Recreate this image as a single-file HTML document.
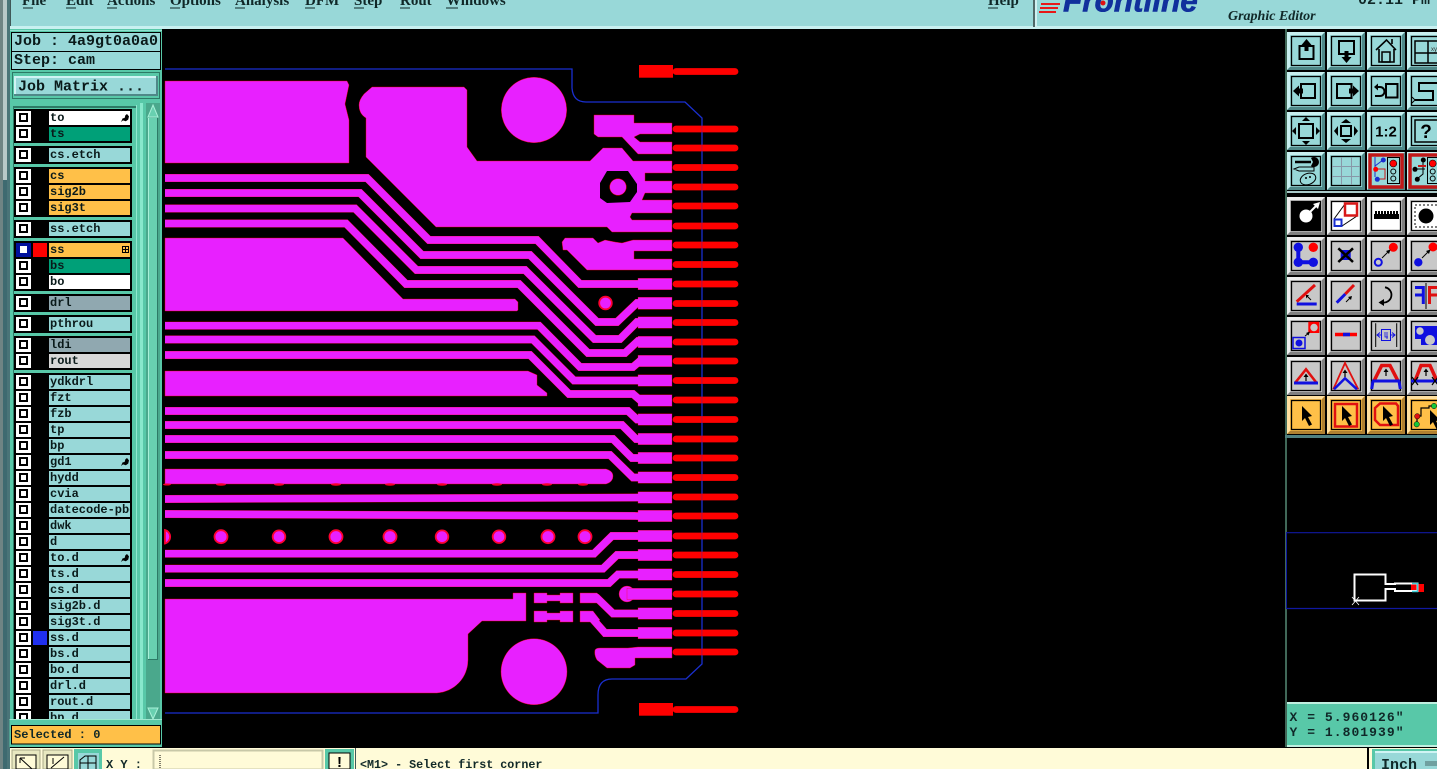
<!DOCTYPE html>
<html><head><meta charset="utf-8"><style>
html,body{margin:0;padding:0;background:#000;width:1437px;height:769px;overflow:hidden}
#g{position:absolute;left:0;top:0}
.p{position:absolute}
.job{position:absolute;left:11px;width:150px;background:#98d8d8;border:1px solid #000;box-sizing:border-box;font:bold 15px/17px "Liberation Mono",monospace;color:#0a1a1a;padding-left:2px;white-space:pre}
.gp{position:absolute;left:14px;width:118px;background:#000}
.r{position:absolute;left:0;width:135px;height:14px}
.c{position:absolute;left:16px;top:0;width:15px;height:14px;background:#fff}
.c:before{content:"";position:absolute;left:3px;top:2px;width:5px;height:5px;border:2px solid #000}
.c.s{background:#00109c}
.c.s:before{left:4px;top:3px;width:7px;height:7px;border:0;background:#fff}
.l{position:absolute;left:49px;top:0;width:81px;height:14px;overflow:hidden;font:bold 12px/14px "Liberation Mono",monospace;color:#0a1a1a;padding-left:1px;box-sizing:border-box;white-space:pre;background:#98d8d8}
.W{background:#fff}.G{background:#00a078}.O{background:#ffc048}.D{background:#90a8b0}.L{background:#d8d8d8}
.sw{position:absolute;left:33px;top:0;width:14px;height:14px}
.h{position:absolute;right:1px;top:3px;width:8px;height:8px;background:#000;clip-path:polygon(0 100%,20% 55%,45% 50%,55% 15%,75% 0,100% 30%,90% 70%,60% 90%,25% 80%)}
</style></head><body>
<svg id="g" width="1437" height="769" viewBox="0 0 1437 769" xmlns="http://www.w3.org/2000/svg">
<defs>
<g id="tr" fill="none" stroke-linejoin="miter">
<polyline points="165,178 367,178 429,240 537,240 580,284 640,284"/>
<polyline points="165,193 360,193 422,255 530,255 597,322 617,322 637,303 645,303"/>
<polyline points="165,208.500 355,208.500 416.500,270 525,270 594.500,339 620,339 637,322 645,322"/>
<polyline points="165,223.500 346,223.500 406,284 519,284 588,353 625,353 638,341 645,341"/>
<polyline points="165,325.700 539,325.700 580,367 633,367 640,361 645,361"/>
<polyline points="165,339.500 533,339.500 574,380.500 645,380.500"/>
<polyline points="165,355 530,355 569,394 633,394 640,400 645,400"/>
<polyline points="165,411 628,411 637,419.500 645,419.500"/>
<polyline points="165,425 622,425 636,439 645,439"/>
<polyline points="165,439 613,439 632,458 645,458"/>
<polyline points="165,455 610,455 633,477.500 645,477.500"/>
<polyline points="165,499 640,497.500"/>
<polyline points="165,514 640,516"/>
<polyline points="165,553.700 594,553.700 612,536 645,536"/>
<polyline points="165,568.700 603,568.700 617,555 645,555"/>
<polyline points="165,583 609,583 618,574.500 645,574.500"/>
<polyline points="590,598 597,598 613,613.500 645,613.500"/>
<polyline points="587,616 590,616 605,633 645,633"/>
</g>
<g id="pads">
<rect x="638" y="278.300" width="34" height="11.400"/><rect x="638" y="297.300" width="34" height="12"/><rect x="638" y="316.800" width="34" height="11.400"/><rect x="638" y="336.300" width="34" height="11.400"/><rect x="638" y="355.300" width="34" height="11.400"/><rect x="638" y="374.800" width="34" height="11.400"/><rect x="638" y="394.800" width="34" height="11.400"/><rect x="638" y="413.800" width="34" height="11.400"/><rect x="638" y="433.300" width="34" height="11.400"/><rect x="638" y="452.300" width="34" height="11.400"/><rect x="638" y="471.800" width="34" height="11.400"/><rect x="638" y="491.800" width="34" height="11.400"/><rect x="638" y="510.300" width="34" height="11.400"/><rect x="638" y="530.300" width="34" height="11.400"/><rect x="638" y="549.300" width="34" height="11.400"/><rect x="638" y="568.800" width="34" height="11.400"/><rect x="627" y="588.300" width="45" height="11.400"/><rect x="638" y="607.800" width="34" height="11.400"/><rect x="638" y="627.300" width="34" height="11.400"/>
</g>
<g id="bT"><rect width="38" height="38" fill="#98d8d8"/><path d="M0 0H38L35 3H3V35L0 38Z" fill="#c8f0f0"/><path d="M38 0V38H0L3 35H35V3Z" fill="#4f8888"/><rect x="4.500" y="4.500" width="29" height="29" fill="none" stroke="#000" stroke-width="1.300"/></g>
<g id="bG"><rect width="38" height="38" fill="#c8c8c8"/><path d="M0 0H38L35 3H3V35L0 38Z" fill="#eee"/><path d="M38 0V38H0L3 35H35V3Z" fill="#808080"/><rect x="4.500" y="4.500" width="29" height="29" fill="none" stroke="#000" stroke-width="1.300"/></g>
<g id="bW"><rect width="38" height="38" fill="#c8c8c8"/><path d="M0 0H38L35 3H3V35L0 38Z" fill="#eee"/><path d="M38 0V38H0L3 35H35V3Z" fill="#808080"/><rect x="4.500" y="4.500" width="29" height="29" fill="#fff" stroke="#000" stroke-width="1.300"/></g>
<g id="bO"><rect width="38" height="38" fill="#ffc048"/><path d="M0 0H38L35 3H3V35L0 38Z" fill="#ffe0a0"/><path d="M38 0V38H0L3 35H35V3Z" fill="#b08030"/><rect x="4.500" y="4.500" width="29" height="29" fill="none" stroke="#000" stroke-width="1.300"/></g>
<polygon id="ptr" points="0,0 0,15 3,12 7,20 10,18.500 6,11 10,10" fill="#000"/>
</defs>

<!-- PCB -->
<path d="M165 69H572V88Q573 102 586 102H685L702 118V664L686 679H612Q598 679 598 695V713H165" fill="none" stroke="#1a2fd0" stroke-width="1.300"/>
<use href="#tr" stroke="#f00" stroke-width="7.900"/>
<g fill="#e820ff" stroke="#f00" stroke-width=".4">
<path d="M165 81H347L349 85L345 104L349 120V163H165Z"/>
<path d="M372 87L364 94Q359 100 359 105Q359 114 366 118V157L436 227H607L612 232H672V220H632L630 217L632 213H672V200H642L645 193H672V181H645V173H672V161H633L622 148H603L590 161H477L467 147V90L464 87Z"/>
<path d="M594 115H634V123H672V134H640L634 137L640 142H672V154H638L622 137H598L594 134Z"/>
<path d="M563 250L562 242L565 238H593L598 243L605 240L615 242L622 243L633 240H672V251H634V259H672V270H587L567 250Z"/>
<path d="M165 238H343L403 299H515L518 302V310L517 311H165Z"/>
<path d="M165 371H528L537 375V385L547 393V396H165Z"/>
<path d="M165 469H606Q613 471 613 476Q613 482 606 484H165Z"/>
<path d="M165 599H513V593H526V621H482L468 634V660A33 33 0 0 1 437 693H165Z"/>
<path d="M534 593H547V595H560V593H573V603H560V601H547V603H534Z"/>
<path d="M534 611H547V613H560V611H573V622H560V620H547V622H534Z"/>
<path d="M580 593H597L606 602V608L597 603H580Z"/>
<path d="M580 611H593L600 620L596 622H580Z"/>
<path d="M595 650Q596 648 600 648H628L638 647H672V658H635V665L630 668H607L597 660Q594 655 595 650Z"/>
<circle cx="534" cy="110" r="32.700"/><circle cx="534" cy="671.700" r="33"/>
<circle cx="627" cy="594" r="8"/>
</g>
<use href="#pads" fill="#e820ff" stroke="#f00" stroke-width=".3"/>
<use href="#tr" stroke="#e820ff" stroke-width="7.400"/>
<polygon points="607,171 628,171 637,184 637,192 630,202 607,203 600,198 600,183" fill="#000"/>
<circle cx="618" cy="187" r="8.300" fill="#e820ff" stroke="#f00" stroke-width=".5"/>
<g fill="#e820ff" stroke="#ff0030" stroke-width="1.800">
<circle cx="605.500" cy="303" r="6.300"/>
<circle cx="221" cy="536.700" r="6.500"/><circle cx="279" cy="536.700" r="6.300"/><circle cx="336" cy="536.700" r="6.500"/><circle cx="390" cy="536.700" r="6.500"/><circle cx="442" cy="536.700" r="6.300"/><circle cx="499" cy="536.700" r="6.300"/><circle cx="548" cy="536.700" r="6.500"/><circle cx="585" cy="536.700" r="6.500"/>
<path d="M165 530A7 7 0 0 1 165 543.500Z"/>
</g>
<g fill="#f80028"><ellipse cx="167" cy="484.500" rx="4" ry="1"/><ellipse cx="221" cy="484.500" rx="5" ry="1.200"/><ellipse cx="279" cy="484.500" rx="5" ry="1.200"/><ellipse cx="336" cy="484.500" rx="5" ry="1.200"/><ellipse cx="390" cy="484.500" rx="5" ry="1.200"/><ellipse cx="442" cy="484.500" rx="5" ry="1.200"/><ellipse cx="497" cy="484.500" rx="5" ry="1.200"/><ellipse cx="547" cy="484.500" rx="5" ry="1.200"/><ellipse cx="583" cy="484.500" rx="5" ry="1.200"/></g>
<!-- red pins -->
<g stroke="#f00" stroke-width="6.800" stroke-linecap="round" fill="none">
<path d="M676 129H735M676 148H735M676 167.500H735M676 187H735M676 206H735M676 226H735M676 245H735M676 264.500H735M676 284H735M676 303.500H735M676 322.500H735M676 342H735M676 361H735M676 380.500H735M676 400H735M676 419.500H735M676 439H735M676 458H735M676 477.500H735M676 497H735M676 516H735M676 536H735M676 555H735M676 574.500H735M676 594H735M676 613.500H735M676 633H735M676 652H735M676 71.500H735M676 709.500H735"/>
</g>
<rect x="639" y="65" width="34" height="12.700" fill="#f00"/><rect x="639" y="703" width="34" height="12.700" fill="#f00"/>
<rect x="701.500" y="118" width=".8" height="546" fill="#1a2fd0" opacity=".45"/>

<!-- top bars -->
<rect x="0" y="0" width="1437" height="29" fill="#98d8d8"/>
<rect x="0" y="26" width="1437" height="3" fill="#c8f0f0"/>
<rect x="1033" y="0" width="2" height="27" fill="#506868"/><rect x="1035" y="0" width="2" height="27" fill="#d0f0f0"/>
<rect x="10" y="0" width="1" height="26" fill="#405858"/>
<g font-family="Liberation Serif,serif" font-weight="bold" font-size="15" fill="#102828">
<text x="22" y="5">File</text><text x="66" y="5">Edit</text><text x="107" y="5">Actions</text><text x="170" y="5">Options</text><text x="235" y="5">Analysis</text><text x="305" y="5">DFM</text><text x="354" y="5">Step</text><text x="400" y="5">Rout</text><text x="446" y="5">Windows</text><text x="988" y="5">Help</text>
</g>
<path d="M23 8H33M66 8H76M107 8H117M170 8H180M235 8H245M305 8H315M354 8H364M400 8H410M446 8H458M988 8H998" stroke="#102828"/>
<text x="1063" y="11.500" font-family="Liberation Sans,sans-serif" font-weight="bold" font-style="italic" font-size="31.500" fill="#10309c" stroke="#10309c" stroke-width=".6">Frontline</text>
<circle cx="1103" cy="3" r="2.500" fill="#e01010"/>
<path d="M1041 4H1060M1040 8H1058M1039 12H1056" stroke="#e81818" stroke-width="2"/>
<text x="1228" y="20" font-family="Liberation Serif,serif" font-weight="bold" font-style="italic" font-size="14" fill="#102828">Graphic Editor</text>
<text x="1358" y="4" font-family="Liberation Mono,monospace" font-weight="bold" font-size="15" fill="#102828" xml:space="preserve">02:11 Pm</text>

<!-- left strip -->
<rect x="0" y="0" width="3" height="769" fill="#6f8484"/>
<rect x="3" y="0" width="4" height="180" fill="#b8c8c8"/><rect x="3" y="180" width="4" height="589" fill="#3e6a70"/>
<rect x="7" y="0" width="3" height="769" fill="#4a7478"/>

<!-- left panel bg -->
<rect x="10" y="29" width="152" height="718" fill="#58c8a8"/>
<rect x="10" y="30" width="152" height="1" fill="#90e0d0"/>
<rect x="14" y="76" width="144" height="20" fill="#98d8d8"/>
<path d="M14 76H158V78H16V96H14Z" fill="#d0f4f4"/><path d="M158 76V96H14V94H156V76Z" fill="#4f8888"/>
<rect x="12.500" y="72.500" width="147" height="26" fill="none" stroke="#2d7a66"/>
<text x="18" y="90.500" font-family="Liberation Mono,monospace" font-weight="bold" font-size="15" fill="#0a1a1a">Job Matrix ...</text>
<rect x="13" y="106" width="123" height="2" fill="#2d7a66"/>
<rect x="13" y="106" width="1" height="613" fill="#2d7a66"/>
<rect x="140" y="103" width="3" height="617" fill="#88e8cc"/>
<rect x="136" y="105" width="1" height="615" fill="#90e8d0"/>
<rect x="146" y="103" width="14" height="617" fill="#4aa88c"/>
<rect x="148" y="118" width="10" height="542" fill="#68d0b0"/><rect x="148" y="118" width="1" height="542" fill="#a8f0d8"/><rect x="157" y="118" width="1" height="542" fill="#2d7a66"/><rect x="148" y="659" width="10" height="1" fill="#2d7a66"/>
<polygon points="153,105 158,117 148,117" fill="#68d0b0" stroke="#a8f0d8"/>
<polygon points="153,719 148,708 158,708" fill="#68d0b0" stroke="#a8f0d8"/>

<!-- right panel bg -->
<rect x="1285" y="29" width="2" height="718" fill="#406858"/>
<rect x="1287" y="191" width="150" height="2" fill="#a8c8c8"/>
<rect x="1285" y="435" width="152" height="3" fill="#4f8080"/>

<!-- TEAL ROW 0 -->
<g transform="translate(1287,32)"><use href="#bT"/><rect x="12.500" y="14" width="14" height="13" fill="none" stroke="#000" stroke-width="2"/><polygon points="19.500,7 24.500,13 21.500,13 21.500,19 17.500,19 17.500,13 14.500,13"/></g>
<g transform="translate(1327,32)"><use href="#bT"/><rect x="12" y="9" width="15" height="13" fill="none" stroke="#000" stroke-width="2"/><polygon points="14.500,25 17.500,25 17.500,19 21.500,19 21.500,25 24.500,25 19.500,31"/></g>
<g transform="translate(1367,32)"><use href="#bT"/><path d="M9 18L19.500 8L29 18M12 17V30H27V17M25 12V7" fill="none" stroke="#000" stroke-width="1.600"/><rect x="15" y="20" width="8" height="10" fill="none" stroke="#000" stroke-width="1.500"/></g>
<g transform="translate(1407,32)"><use href="#bT"/><path d="M8 9H32V31H8ZM8 21H32M21 9V31" fill="none" stroke="#000" stroke-width="1.500"/><text x="24" y="19" font-size="6" font-family="Liberation Sans,sans-serif" fill="#333">xy</text></g>
<!-- ROW 1 -->
<g transform="translate(1287,72)"><use href="#bT"/><rect x="14" y="12" width="14" height="14" fill="none" stroke="#000" stroke-width="2"/><polygon points="6,19 12,13.500 12,16.500 16,16.500 16,21.500 12,21.500 12,24.500"/></g>
<g transform="translate(1327,72)"><use href="#bT"/><rect x="10" y="12" width="14.500" height="14" fill="none" stroke="#000" stroke-width="2"/><polygon points="32,19 26,13.500 26,16.500 22,16.500 22,21.500 26,21.500 26,24.500"/></g>
<g transform="translate(1367,72)"><use href="#bT"/><rect x="19" y="12" width="11.500" height="13.500" fill="none" stroke="#000" stroke-width="2"/><path d="M9 15H13A4.500 4.500 0 0 1 13 24H8" fill="none" stroke="#000" stroke-width="2"/><polygon points="7,15 11,11.500 11,18.500"/></g>
<g transform="translate(1407,72)"><use href="#bT"/><path d="M32 11H12V19H26V28H8" fill="none" stroke="#000" stroke-width="2"/><path d="M5 25L8 28L5 31" fill="none" stroke="#000"/></g>
<!-- ROW 2 -->
<g transform="translate(1287,112)"><use href="#bT"/><rect x="12" y="12" width="14" height="14" fill="none" stroke="#000" stroke-width="2"/><path d="M19 5L15 9H23ZM19 33L15 29H23ZM5 19L9 15V23ZM33 19L29 15V23Z"/></g>
<g transform="translate(1327,112)"><use href="#bT"/><rect x="14" y="14" width="10" height="10" fill="none" stroke="#000" stroke-width="2"/><path d="M19 7L14 11H24ZM19 31L14 27H24ZM7 19L11 14V24ZM31 19L27 14V24Z"/></g>
<g transform="translate(1367,112)"><use href="#bT"/><text x="19" y="24.500" text-anchor="middle" font-family="Liberation Sans,sans-serif" font-weight="bold" font-size="15">1:2</text></g>
<g transform="translate(1407,112)"><use href="#bT"/><rect x="8" y="8" width="24" height="22" fill="none" stroke="#000" stroke-width="1.500"/><text x="19" y="26" text-anchor="middle" font-family="Liberation Sans,sans-serif" font-weight="bold" font-size="19">?</text></g>
<!-- ROW 3 -->
<g transform="translate(1287,152)"><use href="#bT"/><path d="M8 10H24" stroke="#000" stroke-width="2.500"/><path d="M24 6A5 5 0 1 1 24 14L26 10Z" /><path d="M7 17L12 15H27V19H12Z" fill="none" stroke="#000"/><ellipse cx="21" cy="27" rx="8" ry="5.500" fill="none" stroke="#000" transform="rotate(-20 21 27)"/><circle cx="19" cy="26" r="1"/><circle cx="23" cy="25" r="1"/></g>
<g transform="translate(1327,152)"><use href="#bT"/><path d="M14.500 5V33M24.500 5V33M5 14.500H33M5 24.500H33" stroke="#8898a8"/></g>
<g transform="translate(1367,152)"><use href="#bT"/><rect x="3" y="3" width="32" height="32" fill="#98d8d8" stroke="#c01818" stroke-width="3.500"/><rect x="20.500" y="5.500" width="12" height="26" fill="none" stroke="#000"/><circle cx="26.300" cy="11.500" r="3.500" fill="#f00" stroke="#000" stroke-width=".6"/><circle cx="26.300" cy="19.500" r="2.500" fill="none" stroke="#000"/><circle cx="26.300" cy="26.500" r="2.500" fill="none" stroke="#000"/><path d="M8 5V25M16 8L8 14" stroke="#1a2fd0" fill="none"/><path d="M9 17H18V27H10" stroke="#c81818" fill="none"/><circle cx="16.300" cy="8" r="2.500" fill="#1a2fd0"/><circle cx="8.700" cy="17.300" r="2.500" fill="#f00"/><circle cx="10.300" cy="27.300" r="2.500" fill="#1a2fd0"/></g>
<g transform="translate(1407,152)"><use href="#bT"/><rect x="3" y="3" width="32" height="32" fill="#98d8d8" stroke="#c01818" stroke-width="3.500"/><rect x="20.500" y="5.500" width="12" height="26" fill="none" stroke="#000"/><circle cx="25.700" cy="11.500" r="3.500" fill="#f00" stroke="#000" stroke-width=".6"/><circle cx="25.700" cy="19.500" r="2.500" fill="none" stroke="#000"/><circle cx="25.700" cy="26.500" r="2.500" fill="none" stroke="#000"/><path d="M16 8V22L10 27M8 17H18" stroke="#000" fill="none"/><path d="M11 14H19" stroke="#c81818" stroke-width="2"/><circle cx="16.300" cy="8" r="2.500"/><circle cx="8" cy="17.300" r="2.500"/><circle cx="10.300" cy="27.300" r="2.500"/></g>
<!-- WHITE ROW -->
<g transform="translate(1287,197)"><use href="#bW"/><rect x="4.500" y="4.500" width="29" height="29" fill="#000"/><circle cx="19" cy="19" r="6.500" fill="#fff"/><path d="M23 15L30 8" stroke="#fff" stroke-width="2"/><polygon points="33,5 26,7 31,12" fill="#fff"/></g>
<g transform="translate(1327,197)"><use href="#bW"/><path d="M7 22L18 7M15 29L30 19" stroke="#000"/><rect x="18" y="6.500" width="12" height="12" fill="#fff" stroke="#d81818" stroke-width="2.500"/><rect x="7.500" y="22.500" width="7" height="6.500" fill="#fff" stroke="#1a2fd0" stroke-width="2"/></g>
<g transform="translate(1367,197)"><use href="#bW"/><rect x="7" y="14" width="25" height="8" fill="#000"/><path d="M7 15.500H32" stroke="#fff" stroke-width="3" stroke-dasharray="1 2"/></g>
<g transform="translate(1407,197)"><use href="#bW"/><rect x="8" y="8" width="24" height="22" fill="none" stroke="#000" stroke-dasharray="2 2"/><circle cx="19" cy="19" r="7.500"/></g>
<!-- GREY 1 -->
<g transform="translate(1287,237)"><use href="#bG"/><path d="M11.300 10V25.300H26.300" fill="none" stroke="#1010e0" stroke-width="4"/><circle cx="11.300" cy="10.300" r="4.700" fill="#1010e0"/><circle cx="11.300" cy="25.300" r="4.700" fill="#1010e0"/><circle cx="26.300" cy="25.300" r="4.700" fill="#1010e0"/><circle cx="26.300" cy="10.300" r="4.700" fill="#f00"/></g>
<g transform="translate(1327,237)"><use href="#bG"/><rect x="13.700" y="13" width="10" height="10" fill="#1010e0"/><path d="M11.300 11.300L26 25M26 11.300L11.300 25" stroke="#000" stroke-width="2.500"/></g>
<g transform="translate(1367,237)"><use href="#bG"/><circle cx="26.300" cy="10.300" r="4.500" fill="#f00"/><circle cx="11.300" cy="25.300" r="3.500" fill="none" stroke="#1010e0" stroke-width="2"/><path d="M15 21L22 14" stroke="#000"/><polygon points="23.500,12.500 19,14 22,17"/></g>
<g transform="translate(1407,237)"><use href="#bG"/><circle cx="26" cy="10" r="4.500" fill="#f00"/><circle cx="11.300" cy="25.300" r="4.200" fill="#1010e0"/><path d="M15 21L22 14" stroke="#000"/><polygon points="23.500,12.500 19,14 22,17"/></g>
<!-- GREY 2 -->
<g transform="translate(1287,277)"><use href="#bG"/><path d="M9.700 24.700L28 8" stroke="#e01010" stroke-width="3"/><path d="M9.700 27H29.700" stroke="#1010e0" stroke-width="3"/><path d="M20 19L24 23" stroke="#000"/><polygon points="19,18 19,21.500 22,18"/></g>
<g transform="translate(1327,277)"><use href="#bG"/><path d="M9.700 25.700L18.300 17" stroke="#1010e0" stroke-width="3"/><path d="M18.300 17L27 8" stroke="#e01010" stroke-width="3"/><path d="M19 25L24 20" stroke="#000"/><polygon points="25,19 21,20 24,23"/></g>
<g transform="translate(1367,277)"><use href="#bG"/><path d="M18 10.300A7.700 7.700 0 0 1 15.500 25.500" fill="none" stroke="#000" stroke-width="1.800"/><polygon points="11.500,25.500 17,22 17,29"/></g>
<g transform="translate(1407,277)"><use href="#bG"/><path d="M8 10.500H16.300V27M8 18H16.300" fill="none" stroke="#1010e0" stroke-width="3"/><path d="M19 6V32" stroke="#000"/><path d="M22.500 27V10.500H31M22.500 18H31" fill="none" stroke="#e01010" stroke-width="3"/></g>
<!-- GREY 3 -->
<g transform="translate(1287,317)"><use href="#bG"/><rect x="21.300" y="4.700" width="11" height="11.300" fill="#f00"/><circle cx="27" cy="10.500" r="3.700" fill="#c8c8c8"/><rect x="6" y="20.500" width="12" height="11" fill="none" stroke="#1010e0" stroke-width="1.500"/><circle cx="12" cy="26" r="3.500" fill="#1010e0"/><path d="M18 19L22 16" stroke="#000"/><polygon points="23,14.500 19,16 21.500,18.500"/></g>
<g transform="translate(1327,317)"><use href="#bG"/><path d="M8 17.500H30" stroke="#f00" stroke-width="3.500"/><path d="M16 17.500H23" stroke="#1010e0" stroke-width="3.500"/></g>
<g transform="translate(1367,317)"><use href="#bG"/><path d="M8.700 6.300V30M29.700 6.300V30" stroke="#000"/><path d="M10 18H28" stroke="#1010e0"/><path d="M13 15.500L10 18L13 20.500M25 15.500L28 18L25 20.500" fill="none" stroke="#1010e0"/><rect x="14.500" y="12.500" width="9" height="11" fill="#c8c8c8" stroke="#1010e0"/><path d="M18 15V20H21M20 15V22" fill="none" stroke="#1010e0" stroke-width=".8"/></g>
<g transform="translate(1407,317)"><use href="#bG"/><rect x="8" y="9" width="24" height="13" fill="#1010e0"/><rect x="14" y="17" width="18" height="11" fill="#1010e0"/><circle cx="13" cy="14" r="3.700" fill="#c8c8c8"/><circle cx="23" cy="23" r="5" fill="#c8c8c8"/></g>
<!-- GREY 4 -->
<g transform="translate(1287,357)"><use href="#bG"/><path d="M8 26L19 12.300L29.700 26" fill="none" stroke="#e01010" stroke-width="2.500"/><path d="M7 26H31" stroke="#1010e0" stroke-width="3"/><path d="M19 24V19" stroke="#000" stroke-width="1.200"/><polygon points="19,16.500 16.500,20 21.500,20"/></g>
<g transform="translate(1327,357)"><use href="#bG"/><path d="M6.300 32.300L18 6L31.300 32.300" fill="none" stroke="#e01010" stroke-width="1.800"/><path d="M7 32.300L18 21.300L30 32.300" fill="none" stroke="#1010e0" stroke-width="2.500"/><path d="M18 20V15" stroke="#000" stroke-width="1.200"/><polygon points="18,12.500 15.500,16 20.500,16"/></g>
<g transform="translate(1367,357)"><use href="#bG"/><path d="M7 24L14.700 8.500H23L31 24" fill="none" stroke="#e01010" stroke-width="3.500"/><path d="M5 24H33M6 24L4.700 32M32 24L33.300 32" fill="none" stroke="#1010e0" stroke-width="3"/><path d="M19 19V14" stroke="#000" stroke-width="1.200"/><polygon points="19,11.500 16.500,15 21.500,15"/></g>
<g transform="translate(1407,357)"><use href="#bG"/><path d="M8 24L14 8.500H23L30 24" fill="none" stroke="#e01010" stroke-width="3.500"/><path d="M4 24H34" stroke="#1010e0" stroke-width="3"/><path d="M5 20L11 28M11 20L5 28M25 20L31 28M31 20L25 28" stroke="#000" stroke-width="1.200"/><path d="M19 19V14" stroke="#000" stroke-width="1.200"/><polygon points="19,11.500 16.500,15 21.500,15"/></g>
<!-- ORANGE -->
<g transform="translate(1287,396)"><use href="#bO"/><use href="#ptr" x="15" y="10"/></g>
<g transform="translate(1327,396)"><use href="#bO"/><rect x="8" y="8" width="22" height="22.500" fill="none" stroke="#e01010" stroke-width="2.500"/><use href="#ptr" x="15" y="10"/></g>
<g transform="translate(1367,396)"><use href="#bO"/><polygon points="13,7.500 29,7.500 31,10 31,29 13,29 8,24 8,12" fill="none" stroke="#e01010" stroke-width="2.500"/><use href="#ptr" x="16" y="10"/></g>
<g transform="translate(1407,396)"><use href="#bO"/><path d="M10 20V27M10 20H14V12H22V10H27" fill="none" stroke="#000" stroke-width="1.200"/><circle cx="27" cy="10" r="2.700" fill="#18c838" stroke="#000" stroke-width=".5"/><circle cx="10.300" cy="20.300" r="2.700" fill="#e01010" stroke="#000" stroke-width=".5"/><circle cx="9.700" cy="28.300" r="2.700" fill="#18c838" stroke="#000" stroke-width=".5"/><use href="#ptr" x="23" y="14"/></g>

<!-- mini map -->
<path d="M1287 532.700H1437M1287 608.500H1437" stroke="#1018a0" stroke-width="1.200"/>
<rect x="1286" y="532" width="1" height="77" fill="#1018a0"/>
<rect x="1411" y="584" width="13" height="8" fill="#f00"/>
<path d="M1354.500 574.500H1385.500V584H1395V583.500H1417.500V591H1395V589H1385.500V600.500H1354.500Z" fill="none" stroke="#fff" stroke-width="2"/>
<path d="M1412 583.500H1417.500V591.500H1412" fill="none" stroke="#40d0d8" stroke-width="1.500"/>
<path d="M1352 597L1359 605M1359 597L1352 605" stroke="#fff" stroke-width=".8"/>

<!-- coords -->
<rect x="1287" y="702" width="150" height="45" fill="#58c8a8"/>
<rect x="1287" y="702" width="150" height="2" fill="#c0f0e0"/><rect x="1287" y="745" width="150" height="2" fill="#c0f0e0"/>
<g font-family="Liberation Mono,monospace" font-weight="bold" font-size="13" letter-spacing="1.050" fill="#102828" xml:space="preserve"><text x="1289.500" y="721">X = 5.960126"</text><text x="1289.500" y="736">Y = 1.801939"</text></g>

<!-- selected -->
<rect x="9.500" y="719" width="152.500" height="28" fill="#58c8a8"/><rect x="9.500" y="719" width="152.500" height="1" fill="#a0e8d0"/>
<rect x="11.500" y="725.500" width="149" height="18.500" fill="#ffc048" stroke="#000"/>
<text x="14" y="738" font-family="Liberation Mono,monospace" font-weight="bold" font-size="12" fill="#102828" xml:space="preserve">Selected : 0</text>

<!-- bottom bar -->
<rect x="10" y="748" width="1427" height="21" fill="#fffbd8"/>
<rect x="1367" y="748" width="2" height="21" fill="#000"/>
<g><rect x="12" y="750" width="28" height="19" fill="#e8e8c0" stroke="#a8a888"/><rect x="16" y="755" width="20" height="14" fill="#fffbd8" stroke="#000"/><path d="M20 758L32 769M20 758V763M20 758H25" stroke="#000" fill="none"/></g>
<g><rect x="43" y="750" width="29" height="19" fill="#e8e8c0" stroke="#a8a888"/><rect x="47" y="755" width="21" height="14" fill="#fffbd8" stroke="#000"/><path d="M51 768L64 757M53 758V764" stroke="#000" fill="none"/></g>
<g><rect x="74" y="749" width="28" height="20" fill="#58c8a8"/><rect x="78" y="753" width="21" height="16" fill="#98d8d8"/><path d="M80 769V760L85 756H96V769M80 763H96M88 756V769" stroke="#000" fill="none"/></g>
<text x="106" y="768" font-family="Liberation Mono,monospace" font-weight="bold" font-size="12" fill="#102828" xml:space="preserve">X Y :</text>
<rect x="153.500" y="750.500" width="169" height="19" fill="#fffbd8" stroke="#c8c8a8" stroke-width="2"/>
<path d="M160 755V769" stroke="#000" stroke-dasharray="1 1"/>
<rect x="325" y="749" width="29" height="20" fill="#58c8a8"/><rect x="329" y="753" width="21" height="16" fill="#fffbd8" stroke="#000"/>
<text x="339.500" y="767" text-anchor="middle" font-family="Liberation Sans,sans-serif" font-weight="bold" font-size="15" fill="#000">!</text>
<rect x="355" y="748" width="1" height="21" fill="#405858"/>
<text x="360" y="768" font-family="Liberation Mono,monospace" font-weight="bold" font-size="11.700" fill="#102828" xml:space="preserve">&lt;M1&gt; - Select first corner</text>
<rect x="1372" y="749" width="65" height="20" fill="#58c8a8"/><rect x="1375" y="752" width="62" height="17" fill="#98d8d8"/><path d="M1375 752H1437" stroke="#d0f4f4" stroke-width="2"/>
<text x="1381" y="769" font-family="Liberation Mono,monospace" font-weight="bold" font-size="15" fill="#102828">Inch</text>
<rect x="1425" y="761" width="12" height="5" fill="#70a0a0"/>
</svg>

<div class="job" style="top:32px;height:20px">Job : 4a9gt0a0a0</div>
<div class="job" style="top:51px;height:19px">Step: cam</div>

<div class="p" style="left:0;top:0;width:136px;height:719px;overflow:hidden">
<div class="gp" style="top:109px;height:34px"></div><div class="gp" style="top:146px;height:18px"></div><div class="gp" style="top:167px;height:50px"></div><div class="gp" style="top:220px;height:18px"></div><div class="gp" style="top:241px;height:50px"></div><div class="gp" style="top:294px;height:18px"></div><div class="gp" style="top:315px;height:18px"></div><div class="gp" style="top:336px;height:34px"></div><div class="gp" style="top:373px;height:360px"></div>
<div class="r" style="top:111px"><i class="c"></i><b class="l W">to<i class="h"></i></b></div>
<div class="r" style="top:127px"><i class="c"></i><b class="l G">ts</b></div>
<div class="r" style="top:148px"><i class="c"></i><b class="l">cs.etch</b></div>
<div class="r" style="top:169px"><i class="c"></i><b class="l O">cs</b></div>
<div class="r" style="top:185px"><i class="c"></i><b class="l O">sig2b</b></div>
<div class="r" style="top:201px"><i class="c"></i><b class="l O">sig3t</b></div>
<div class="r" style="top:222px"><i class="c"></i><b class="l">ss.etch</b></div>
<div class="r" style="top:243px"><i class="c s"></i><i class="sw" style="background:#f00"></i><b class="l O">ss<span style="position:absolute;right:1px;top:3px;width:7px;height:7px;border:1px solid #000;box-sizing:border-box;background:linear-gradient(#000,#000) center/1px 100% no-repeat,linear-gradient(#000,#000) center/100% 1px no-repeat"></span></b></div>
<div class="r" style="top:259px"><i class="c"></i><b class="l G">bs</b></div>
<div class="r" style="top:275px"><i class="c"></i><b class="l W">bo</b></div>
<div class="r" style="top:296px"><i class="c"></i><b class="l D">drl</b></div>
<div class="r" style="top:317px"><i class="c"></i><b class="l">pthrou</b></div>
<div class="r" style="top:338px"><i class="c"></i><b class="l D">ldi</b></div>
<div class="r" style="top:354px"><i class="c"></i><b class="l L">rout</b></div>
<div class="r" style="top:375px"><i class="c"></i><b class="l">ydkdrl</b></div>
<div class="r" style="top:391px"><i class="c"></i><b class="l">fzt</b></div>
<div class="r" style="top:407px"><i class="c"></i><b class="l">fzb</b></div>
<div class="r" style="top:423px"><i class="c"></i><b class="l">tp</b></div>
<div class="r" style="top:439px"><i class="c"></i><b class="l">bp</b></div>
<div class="r" style="top:455px"><i class="c"></i><b class="l">gd1<i class="h"></i></b></div>
<div class="r" style="top:471px"><i class="c"></i><b class="l">hydd</b></div>
<div class="r" style="top:487px"><i class="c"></i><b class="l">cvia</b></div>
<div class="r" style="top:503px"><i class="c"></i><b class="l">datecode-pbe</b></div>
<div class="r" style="top:519px"><i class="c"></i><b class="l">dwk</b></div>
<div class="r" style="top:535px"><i class="c"></i><b class="l">d</b></div>
<div class="r" style="top:551px"><i class="c"></i><b class="l">to.d<i class="h"></i></b></div>
<div class="r" style="top:567px"><i class="c"></i><b class="l">ts.d</b></div>
<div class="r" style="top:583px"><i class="c"></i><b class="l">cs.d</b></div>
<div class="r" style="top:599px"><i class="c"></i><b class="l">sig2b.d</b></div>
<div class="r" style="top:615px"><i class="c"></i><b class="l">sig3t.d</b></div>
<div class="r" style="top:631px"><i class="c"></i><i class="sw" style="background:#2030f0"></i><b class="l">ss.d</b></div>
<div class="r" style="top:647px"><i class="c"></i><b class="l">bs.d</b></div>
<div class="r" style="top:663px"><i class="c"></i><b class="l">bo.d</b></div>
<div class="r" style="top:679px"><i class="c"></i><b class="l">drl.d</b></div>
<div class="r" style="top:695px"><i class="c"></i><b class="l">rout.d</b></div>
<div class="r" style="top:711px"><i class="c"></i><b class="l">bp.d</b></div>
</div>
</body></html>
